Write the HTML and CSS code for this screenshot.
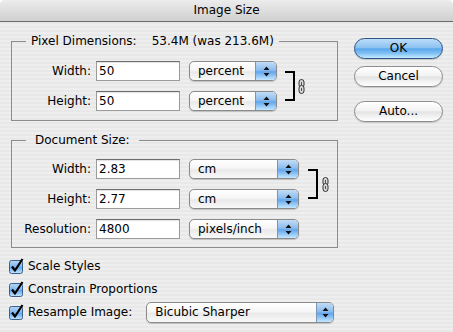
FILE: index.html
```html
<!DOCTYPE html>
<html>
<head>
<meta charset="utf-8">
<title>Image Size</title>
<link rel="stylesheet" href="styles.css">
</head>
<body>
<div class="window">
  <div class="titlebar">Image Size</div>
  <div class="content">
    <div class="main">
      <fieldset class="group pixel">
        <legend><span>Pixel Dimensions:</span><span class="val">53.4M (was 213.6M)</span></legend>
        <div class="rows rows-pixel">
          <label class="lbl">Width:</label>
          <div class="field">50</div>
          <div class="popup popup-pct"><span class="popup-text">percent</span><span class="popup-arrows"><svg width="7" height="11" viewBox="0 0 7 11"><path d="M3.5 0.5 L6.5 4 L0.5 4 Z M0.5 7 L6.5 7 L3.5 10.5 Z" fill="#111"/></svg></span></div>
          <div class="link">
            <div class="bracket"></div>
            <svg class="chain" width="7" height="15" viewBox="0 0 7 15"><rect x="1" y="0.5" width="5" height="8" rx="2.5" fill="#d8d8d8" stroke="#333"/><rect x="1" y="6.5" width="5" height="8" rx="2.5" fill="#d8d8d8" stroke="#333"/><path d="M3.5 3 V6 M3.5 9 V12" stroke="#555" stroke-width="1"/></svg>
          </div>
          <label class="lbl">Height:</label>
          <div class="field">50</div>
          <div class="popup popup-pct"><span class="popup-text">percent</span><span class="popup-arrows"><svg width="7" height="11" viewBox="0 0 7 11"><path d="M3.5 0.5 L6.5 4 L0.5 4 Z M0.5 7 L6.5 7 L3.5 10.5 Z" fill="#111"/></svg></span></div>
        </div>
      </fieldset>

      <fieldset class="group doc">
        <legend>Document Size:</legend>
        <div class="rows rows-doc">
          <label class="lbl">Width:</label>
          <div class="field">2.83</div>
          <div class="popup popup-doc"><span class="popup-text">cm</span><span class="popup-arrows"><svg width="7" height="11" viewBox="0 0 7 11"><path d="M3.5 0.5 L6.5 4 L0.5 4 Z M0.5 7 L6.5 7 L3.5 10.5 Z" fill="#111"/></svg></span></div>
          <div class="link">
            <div class="bracket"></div>
            <svg class="chain" width="7" height="15" viewBox="0 0 7 15"><rect x="1" y="0.5" width="5" height="8" rx="2.5" fill="#d8d8d8" stroke="#333"/><rect x="1" y="6.5" width="5" height="8" rx="2.5" fill="#d8d8d8" stroke="#333"/><path d="M3.5 3 V6 M3.5 9 V12" stroke="#555" stroke-width="1"/></svg>
          </div>
          <label class="lbl">Height:</label>
          <div class="field">2.77</div>
          <div class="popup popup-doc"><span class="popup-text">cm</span><span class="popup-arrows"><svg width="7" height="11" viewBox="0 0 7 11"><path d="M3.5 0.5 L6.5 4 L0.5 4 Z M0.5 7 L6.5 7 L3.5 10.5 Z" fill="#111"/></svg></span></div>
          <label class="lbl">Resolution:</label>
          <div class="field">4800</div>
          <div class="popup popup-doc"><span class="popup-text">pixels/inch</span><span class="popup-arrows"><svg width="7" height="11" viewBox="0 0 7 11"><path d="M3.5 0.5 L6.5 4 L0.5 4 Z M0.5 7 L6.5 7 L3.5 10.5 Z" fill="#111"/></svg></span></div>
        </div>
      </fieldset>

      <div class="checks">
        <div class="check-row">
          <svg class="cb" width="16" height="16" viewBox="0 0 16 16"><defs><linearGradient id="cbg" x1="0" y1="0" x2="0" y2="1"><stop offset="0" stop-color="#b9d7f5"/><stop offset="0.5" stop-color="#7db5ec"/><stop offset="0.51" stop-color="#5fa3ea"/><stop offset="1" stop-color="#c6e8ff"/></linearGradient></defs><rect x="0.5" y="2.5" width="13" height="13" rx="2" fill="url(#cbg)" stroke="#3d5f8c"/><path d="M3 8.5 L6 12.5 L13.5 1" fill="none" stroke="#000" stroke-width="2.2" stroke-linejoin="round"/></svg>
          <span>Scale Styles</span>
        </div>
        <div class="check-row">
          <svg class="cb" width="16" height="16" viewBox="0 0 16 16"><rect x="0.5" y="2.5" width="13" height="13" rx="2" fill="url(#cbg)" stroke="#3d5f8c"/><path d="M3 8.5 L6 12.5 L13.5 1" fill="none" stroke="#000" stroke-width="2.2" stroke-linejoin="round"/></svg>
          <span>Constrain Proportions</span>
        </div>
        <div class="check-row">
          <svg class="cb" width="16" height="16" viewBox="0 0 16 16"><rect x="0.5" y="2.5" width="13" height="13" rx="2" fill="url(#cbg)" stroke="#3d5f8c"/><path d="M3 8.5 L6 12.5 L13.5 1" fill="none" stroke="#000" stroke-width="2.2" stroke-linejoin="round"/></svg>
          <span>Resample Image:</span>
          <div class="popup popup-resample"><span class="popup-text">Bicubic Sharper</span><span class="popup-arrows"><svg width="7" height="11" viewBox="0 0 7 11"><path d="M3.5 0.5 L6.5 4 L0.5 4 Z M0.5 7 L6.5 7 L3.5 10.5 Z" fill="#111"/></svg></span></div>
        </div>
      </div>
    </div>

    <div class="side">
      <div class="btn btn-default">OK</div>
      <div class="btn btn-cancel">Cancel</div>
      <div class="btn btn-auto">Auto...</div>
    </div>
  </div>
</div>
</body>
</html>
```

FILE: styles.css
```css
* { box-sizing: border-box; }

html, body {
  margin: 0;
  padding: 0;
  background: #ffffff;
}

body {
  font-family: "DejaVu Sans", Verdana, sans-serif;
  font-size: 12px;
  color: #000;
  width: 453px;
  height: 332px;
  overflow: hidden;
}

.window {
  width: 453px;
  height: 332px;
  border-radius: 5px 5px 0 0;
  overflow: hidden;
  background: repeating-linear-gradient(to bottom, #eeeeee 0 2px, #e8e8e8 2px 4px);
}

.titlebar {
  height: 22px;
  line-height: 21px;
  text-align: center;
  font-size: 12px;
  background: linear-gradient(#ececec, #d0d0d0);
  border-bottom: 1px solid #6a6a6a;
}

.content {
  display: flex;
}

.main {
  margin-left: 11px;
  width: 327px;
}

/* group boxes */
.group {
  margin: 12px 0 0;
  border: 1px solid #8c8c8c;
  min-width: 0;
}

.group legend {
  margin-left: 14px;
  line-height: 14px;
}

.pixel {
  padding: 13px 0 9px;
}

.pixel legend {
  padding: 0 5px;
}

.pixel .val {
  margin-left: 15px;
}

.doc {
  padding: 12px 0 8px;
}

.doc legend {
  padding: 0 9px;
}

.rows {
  display: grid;
  grid-auto-rows: 20px;
  row-gap: 10px;
  align-items: center;
}

.rows-pixel {
  grid-template-columns: 84px 84px 97px auto;
}

.rows-doc {
  grid-template-columns: 84px 84px 119px auto;
}

.lbl {
  text-align: right;
  padding-right: 5px;
  white-space: nowrap;
}

.field {
  height: 20px;
  line-height: 18px;
  padding-left: 2px;
  background: #fff;
  border: 1px solid #9b9b9b;
  border-top-color: #6d6d6d;
  box-shadow: inset 0 1px 1px rgba(0, 0, 0, 0.12);
}

/* popup menus */
.popup {
  display: flex;
  height: 20px;
  margin-left: 9px;
  border: 1px solid #8a8a8a;
  border-radius: 5px;
  overflow: hidden;
  background: linear-gradient(#ffffff 0%, #f6f6f6 45%, #e9e9e9 55%, #f9f9f9 100%);
  box-shadow: 0 1px 1px rgba(0, 0, 0, 0.18);
}

.popup-pct { width: 88px; }
.popup-doc { width: 110px; }

.popup-text {
  flex: 1;
  padding-left: 8px;
  line-height: 18px;
  white-space: nowrap;
}

.popup-arrows {
  width: 21px;
  display: flex;
  align-items: center;
  justify-content: center;
  border-left: 1px solid #7b95b5;
  background: linear-gradient(#c2dcf6 0%, #8cbdee 45%, #62a6ec 55%, #c3e6ff 100%);
}

.popup-resample {
  width: 188px;
  height: 21px;
  margin-left: 14px;
}

.popup-resample .popup-text {
  line-height: 19px;
}

.popup-resample .popup-arrows {
  width: 17px;
}

/* link bracket */
.link {
  grid-column: 4;
  grid-row: 1 / span 2;
  align-self: stretch;
  display: flex;
  align-items: center;
}

.bracket {
  width: 10px;
  height: 30px;
  margin-left: 8px;
  border: 2px solid #000;
  border-left: none;
}

.rows-doc .bracket {
  margin-left: 9px;
}

.chain {
  margin-left: 3px;
}

.rows-doc .chain {
  margin-left: 4px;
}

/* checkboxes */
.checks {
  margin: 7px 0 0 -2px;
  display: flex;
  flex-direction: column;
  row-gap: 1px;
}

.check-row {
  display: flex;
  align-items: center;
  height: 22px;
}

.cb {
  margin-right: 3px;
  flex: none;
}

/* buttons */
.side {
  margin-left: 16px;
  padding-top: 16px;
  width: 89px;
  display: flex;
  flex-direction: column;
}

.btn {
  height: 21px;
  line-height: 19px;
  text-align: center;
  border-radius: 11px;
  border: 1px solid #8d8d8d;
  background: linear-gradient(#ffffff 0%, #f3f3f3 45%, #e3e3e3 52%, #f4f4f4 80%, #ffffff 100%);
  box-shadow: 0 1px 1px rgba(0, 0, 0, 0.15);
}

.btn-default {
  border-color: #2f5583;
  background: linear-gradient(#bcdcf8 0%, #8ec3f1 45%, #5aa6ec 52%, #7fc0f4 75%, #c4ecff 100%);
}

.btn-cancel {
  margin-top: 7px;
}

.btn-auto {
  margin-top: 14px;
}
```
